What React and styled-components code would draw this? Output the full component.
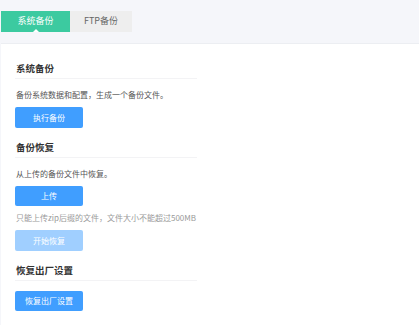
import React, { useState } from "react";
import styled, { createGlobalStyle } from "styled-components";

const GlobalStyle = createGlobalStyle`
  html, body {
    margin: 0;
    padding: 0;
    background: #f5f6fa;
    font-family: "Noto Sans CJK SC", "Noto Sans", sans-serif;
  }
`;

// Page
const Page = styled.div`
  width: 419px;
  height: 325px;
  display: flex;
  flex-direction: column;
  overflow: hidden;
`;

// Tabs
const Tabs = styled.div`
  display: flex;
  margin: 11px 0 0 1px;
`;

const Tab = styled.div`
  position: relative;
  height: 20.5px;
  line-height: 20.5px;
  width: ${(p) => (p.active ? "69px" : "62px")};
  text-align: center;
  font-size: 9px;
  color: ${(p) => (p.active ? "#ffffff" : "#666666")};
  background: ${(p) => (p.active ? "#3ccaa0" : "#eeeeee")};
  cursor: pointer;
  &::after {
    content: "";
    display: ${(p) => (p.active ? "block" : "none")};
    position: absolute;
    left: 50%;
    bottom: 0;
    transform: translateX(-50%);
    border-left: 3.5px solid transparent;
    border-right: 3.5px solid transparent;
    border-bottom: 3.5px solid #ffffff;
  }
`;

// Panel
const Panel = styled.div`
  flex: 1;
  margin: 11.5px 0 0 1px;
  background: #ffffff;
  border-top: 1px solid #eceef2;
  padding: 17px 14px 0;
`;

const Section = styled.div`
  display: flex;
  flex-direction: column;
  align-items: flex-start;
  margin-bottom: 6px;
`;

const Title = styled.div`
  width: 180px;
  font-size: 9.5px;
  font-weight: 600;
  line-height: 14px;
  color: #333333;
  padding: 0 1px 3px;
  border-bottom: 1px solid #f3f3f5;
  margin-bottom: 10px;
`;

const Text = styled.div`
  font-size: 8px;
  line-height: 12px;
  color: ${(p) => (p.muted ? "#9a9a9a" : "#555555")};
  margin: 0 0 6px 1px;
`;

const Button = styled.button`
  width: 68px;
  height: 20.5px;
  padding: 0;
  border: none;
  border-radius: 2px;
  font-family: inherit;
  font-size: 8px;
  color: #ffffff;
  background: ${(p) => (p.disabled ? "#a0cfff" : "#409eff")};
  cursor: ${(p) => (p.disabled ? "not-allowed" : "pointer")};
  margin-bottom: 6px;
`;

export default function App() {
  const [tab, setTab] = useState(0);
  return (
    <Page>
      <GlobalStyle />
      <Tabs>
        <Tab active={tab === 0} onClick={() => setTab(0)}>
          系统备份
        </Tab>
        <Tab active={tab === 1} onClick={() => setTab(1)}>
          FTP备份
        </Tab>
      </Tabs>

      <Panel>
        <Section>
          <Title>系统备份</Title>
          <Text>备份系统数据和配置，生成一个备份文件。</Text>
          <Button>执行备份</Button>
        </Section>

        <Section>
          <Title>备份恢复</Title>
          <Text>从上传的备份文件中恢复。</Text>
          <Button>上传</Button>
          <Text muted>只能上传zip后缀的文件，文件大小不能超过500MB</Text>
          <Button disabled>开始恢复</Button>
        </Section>

        <Section>
          <Title>恢复出厂设置</Title>
          <Button>恢复出厂设置</Button>
        </Section>
      </Panel>
    </Page>
  );
}
